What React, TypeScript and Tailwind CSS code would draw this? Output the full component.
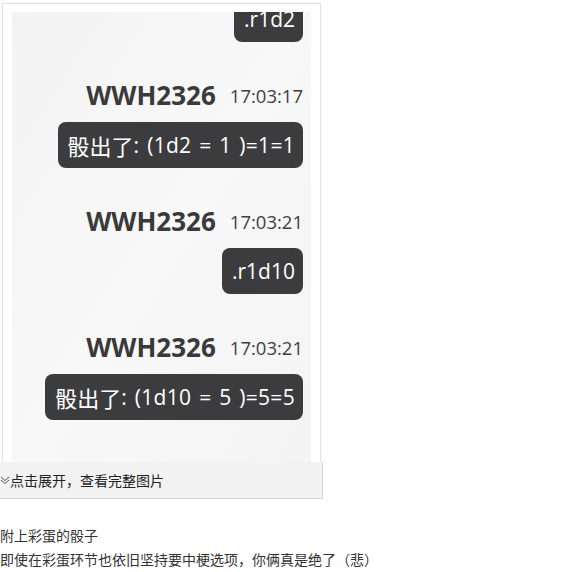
import React from "react";

const sans = { fontFamily: '"Open Sans", "Noto Sans CJK SC", sans-serif' };
const cjk = { fontFamily: '"Noto Sans CJK SC", "Microsoft YaHei", sans-serif' };

function Bubble({ cn, text, first }: { cn?: string; text: string; first?: boolean }) {
  return (
    <div
      className={`h-[46px] pl-[10px] pr-[8px] rounded-[8px] bg-[#3c3c3e] text-white text-[21px] flex items-center leading-none ${first ? "-mt-[16px]" : ""}`}
      style={sans}
    >
      {cn && (
        <span className="text-[22px]" style={cjk}>
          {cn}
        </span>
      )}
      <span className={cn ? "tracking-[0.3px] [word-spacing:2px]" : ""}>{text}</span>
    </div>
  );
}

function NameRow({ time }: { time: string }) {
  return (
    <div className="mt-[40px] mb-[14px] h-[26px] flex items-center gap-[14px]" style={sans}>
      <span className="text-[26px] font-bold text-[#3a3a3a] leading-none">WWH2326</span>
      <span className="text-[18.5px] text-[#3f3f3f] leading-none pt-[2px]">{time}</span>
    </div>
  );
}

export default function App() {
  return (
    <div className="w-[568px] h-[572px] bg-white overflow-hidden">
      <div className="w-[324px] pt-[3px]">
        <div className="ml-[2px] w-[319px] h-[459px] border border-[#e3e3e3] border-b-0 bg-white px-[9px] pt-[8px] overflow-hidden shadow-[0_0_3px_rgba(0,0,0,0.06)]">
          <div className="h-[460px] bg-gradient-to-br from-[#f3f3f3] via-[#f8f8f8] to-[#f4f4f4] flex flex-col items-end pr-[8px] overflow-hidden">
            <Bubble text=".r1d2" first />
            <NameRow time="17:03:17" />
            <Bubble cn="骰出了" text=": (1d2 = 1 )=1=1" />
            <NameRow time="17:03:21" />
            <Bubble text=".r1d10" />
            <NameRow time="17:03:21" />
            <Bubble cn="骰出了" text=": (1d10 = 5 )=5=5" />
          </div>
        </div>
        <div
          className="h-[37px] w-[323px] bg-[#f2f2f2] border-r border-b border-[#d6d6d6] flex items-center text-[14px] text-[#222]"
          style={cjk}
        >
          <svg width="10" height="10" viewBox="0 0 10 10" className="ml-[0px] mr-[0px]" fill="none" stroke="#555" strokeWidth="1">
            <polyline points="1,2 5,5.5 9,2" />
            <polyline points="1,5 5,8.5 9,5" />
          </svg>
          <span>点击展开，查看完整图片</span>
        </div>
      </div>
      <div className="mt-[24px] text-[14px] leading-[24px] text-[#333]" style={cjk}>
        <p>附上彩蛋的骰子</p>
        <p>即使在彩蛋环节也依旧坚持要中梗选项，你俩真是绝了（悲）</p>
      </div>
    </div>
  );
}
